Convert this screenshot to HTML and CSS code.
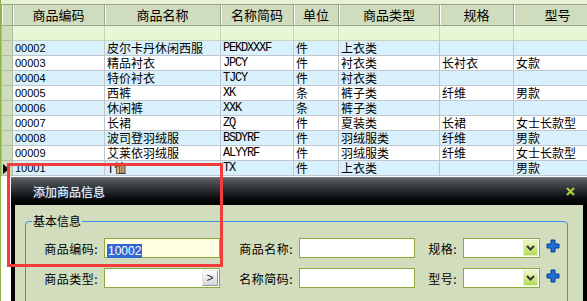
FILE: index.html
```html
<!DOCTYPE html>
<html lang="zh-cn">
<head>
<meta charset="UTF-8">
<title>商品信息</title>
<link rel="stylesheet" href="styles.css">
</head>
<body>
    <div class="page">
        <div class="grid">
            <div class="grid-top"></div>
            <table class="data">
                <colgroup>
                    <col class="c-rh"><col class="c-id"><col class="c-name"><col class="c-code">
                    <col class="c-unit"><col class="c-type"><col class="c-spec"><col class="c-model">
                </colgroup>
                <thead>
                    <tr><th class="rh"></th><th>商品编码</th><th>商品名称</th><th>名称简码</th><th>单位</th><th>商品类型</th><th>规格</th><th>型号</th></tr>
                    <tr class="filter"><td class="rh"></td><td></td><td></td><td></td><td></td><td></td><td></td><td></td></tr>
                </thead>
                <tbody>
                    <tr class="alt"><td class="rh"></td><td class="num">00002</td><td>皮尔卡丹休闲西服</td><td class="code">PEKDXXXF</td><td>件</td><td>上衣类</td><td></td><td></td></tr>
                    <tr><td class="rh"></td><td class="num">00003</td><td>精品衬衣</td><td class="code">JPCY</td><td>件</td><td>衬衣类</td><td>长衬衣</td><td>女款</td></tr>
                    <tr class="alt"><td class="rh"></td><td class="num">00004</td><td>特价衬衣</td><td class="code">TJCY</td><td>件</td><td>衬衣类</td><td></td><td></td></tr>
                    <tr><td class="rh"></td><td class="num">00005</td><td>西裤</td><td class="code">XK</td><td>条</td><td>裤子类</td><td>纤维</td><td>男款</td></tr>
                    <tr class="alt"><td class="rh"></td><td class="num">00006</td><td>休闲裤</td><td class="code">XXK</td><td>条</td><td>裤子类</td><td></td><td></td></tr>
                    <tr><td class="rh"></td><td class="num">00007</td><td>长裙</td><td class="code">ZQ</td><td>件</td><td>夏装类</td><td>长裙</td><td>女士长款型</td></tr>
                    <tr class="alt"><td class="rh"></td><td class="num">00008</td><td>波司登羽绒服</td><td class="code">BSDYRF</td><td>件</td><td>羽绒服类</td><td>纤维</td><td>男款</td></tr>
                    <tr><td class="rh"></td><td class="num">00009</td><td>艾莱依羽绒服</td><td class="code">ALYYRF</td><td>件</td><td>羽绒服类</td><td>纤维</td><td>女士长款型</td></tr>
                    <tr class="alt"><td class="rh"><svg class="cur" width="6" height="10" viewBox="0 0 6 10"><path d="M0 0L6 5L0 10Z" fill="#000"/></svg></td><td class="num">10001</td><td>T恤</td><td class="code">TX</td><td>件</td><td>上衣类</td><td></td><td>男款</td></tr>
                </tbody>
            </table>
        </div>

        <div class="dialog">
            <div class="dialog-title">
                <span>添加商品信息</span>
                <svg width="9" height="9" viewBox="0 0 9 9"><path d="M1 1L8 8M8 1L1 8" stroke="#a6d23c" stroke-width="2.2"/></svg>
            </div>
            <div class="dialog-body">
                <fieldset class="group">
                    <legend>基本信息</legend>
                    <div class="form">
                        <label>商品编码:</label>
                        <div class="field yellow"><span class="sel">10002</span></div>
                        <label>商品名称:</label>
                        <div class="field"></div>
                        <label>规格:</label>
                        <div class="field drop">
                            <span class="drop-btn"><svg width="9" height="6" viewBox="0 0 9 6"><path d="M1 1L4.5 4.5L8 1" stroke="#333" stroke-width="2" fill="none"/></svg></span>
                        </div>
                        <svg class="plus" width="14" height="14" viewBox="0 0 14 14"><path d="M5 1H9V5H13V9H9V13H5V9H1V5H5Z" fill="#1f6fd8" stroke="#0b3c8e"/></svg>

                        <label>商品类型:</label>
                        <div class="field drop"><span class="browse">&gt;</span></div>
                        <label>名称简码:</label>
                        <div class="field"></div>
                        <label>型号:</label>
                        <div class="field drop">
                            <span class="drop-btn"><svg width="9" height="6" viewBox="0 0 9 6"><path d="M1 1L4.5 4.5L8 1" stroke="#333" stroke-width="2" fill="none"/></svg></span>
                        </div>
                        <svg class="plus" width="14" height="14" viewBox="0 0 14 14"><path d="M5 1H9V5H13V9H9V13H5V9H1V5H5Z" fill="#1f6fd8" stroke="#0b3c8e"/></svg>
                    </div>
                </fieldset>
            </div>
        </div>

        <div class="mark"></div>
    </div>
</body>
</html>
```

FILE: styles.css
```css
body {
    margin: 0;
    overflow: hidden;
    background: #fff;
    font-family: "Noto Sans CJK SC", sans-serif;
    font-size: 12px;
    color: #000;
}

.page {
    position: relative;
    width: 587px;
    height: 301px;
    overflow: hidden;
}

.grid {
    height: 301px;
    border-left: 1px solid #8fb24a;
}

.grid-top {
    height: 4px;
    background: #e6f2d2;
}

.data {
    border-collapse: collapse;
    table-layout: fixed;
    width: 600px;
}

.c-rh { width: 11px; }
.c-id { width: 92px; }
.c-name { width: 116px; }
.c-code { width: 73px; }
.c-unit { width: 45px; }
.c-type { width: 101px; }
.c-spec { width: 74px; }
.c-model { width: 88px; }

.data th {
    background: #d0dcbe;
    font-weight: normal;
    font-size: 13px;
    line-height: 20px;
    padding: 0;
    border: 1px solid #98a68a;
    box-shadow: inset 1px 0 0 #fff;
    text-align: center;
}

.data td {
    border: 1px solid #c0c6cc;
    padding: 0 0 0 2px;
    line-height: 14px;
    height: 14px;
    white-space: nowrap;
    overflow: hidden;
}

.data .filter td {
    background: #e8f6d6;
    border-color: #c8d4b8;
}

.data .alt td {
    background: #d8f1fc;
}

.data td.rh,
.data tr.alt td.rh {
    background: #d0dcbe;
    border-color: #b4bea6;
    padding: 0;
}

.cur {
    display: block;
    margin: 2px 0 0 1px;
}

.num {
    font-family: "Liberation Sans", sans-serif;
    font-size: 11px;
}

.code {
    font-family: "Liberation Mono", monospace;
    font-size: 12px;
    letter-spacing: -1.2px;
}

/* dialog window */
.dialog {
    position: absolute;
    left: 11px;
    top: 177px;
    width: 576px;
    height: 140px;
    background: #000;
}

.dialog-title {
    height: 28px;
    box-sizing: border-box;
    padding: 0 12px 0 22px;
    display: flex;
    align-items: center;
    justify-content: space-between;
    background: linear-gradient(#7a7e82 0, #55595d 8%, #2c3034 45%, #0b0d0f 75%, #000 100%);
    color: #eaf2ff;
    font-size: 12px;
    text-shadow: 0 0 1px #6aa0d0;
}

.dialog-body {
    margin: 0 4px;
    height: 120px;
    background: #d1ddbd;
    padding: 8px 15px 0 10px;
}

.group {
    margin: 0;
    padding: 9px 0 20px 6px;
    border: 1px solid #3a8fe4;
    border-radius: 4px;
}

.group legend {
    padding: 0 1px;
    line-height: 16px;
}

.form {
    display: grid;
    grid-template-columns: 72px 116px 79px 116px 48px 77px 22px;
    grid-auto-rows: 20px;
    row-gap: 10px;
    align-items: center;
}

.form label {
    text-align: right;
    padding-right: 6px;
    letter-spacing: 0.5px;
}

.field {
    height: 20px;
    box-sizing: border-box;
    border: 1px solid #8aaa3c;
    background: #fff;
}

.field.yellow {
    background: #fffee2;
    padding: 2px 0 0 2px;
}

.sel {
    display: inline-block;
    background: #3168d2;
    color: #fff;
    font-family: "Liberation Sans", sans-serif;
    font-size: 12px;
    line-height: 14px;
    padding: 0 1px;
}

.drop {
    display: flex;
    justify-content: flex-end;
    align-items: center;
    padding-right: 1px;
}

.drop-btn {
    width: 15px;
    height: 16px;
    box-sizing: border-box;
    border: 1px solid #e4f0c0;
    background: linear-gradient(#eef8c8, #b2da52);
    display: flex;
    align-items: center;
    justify-content: center;
}

.browse {
    width: 16px;
    height: 16px;
    box-sizing: border-box;
    border: 1px solid #9a9a9a;
    border-top-color: #e8e8e8;
    border-left-color: #e8e8e8;
    background: linear-gradient(#fdfdfd, #d8d8d8);
    font-family: "Liberation Sans", sans-serif;
    font-size: 12px;
    line-height: 14px;
    text-align: center;
    color: #333;
}

.plus {
    margin-left: 6px;
    margin-top: -4px;
}

/* red highlight drawn over the screenshot */
.mark {
    position: absolute;
    left: 7px;
    top: 163px;
    width: 216px;
    height: 104px;
    box-sizing: border-box;
    border: 3px solid #f23b3b;
    z-index: 5;
}
```
